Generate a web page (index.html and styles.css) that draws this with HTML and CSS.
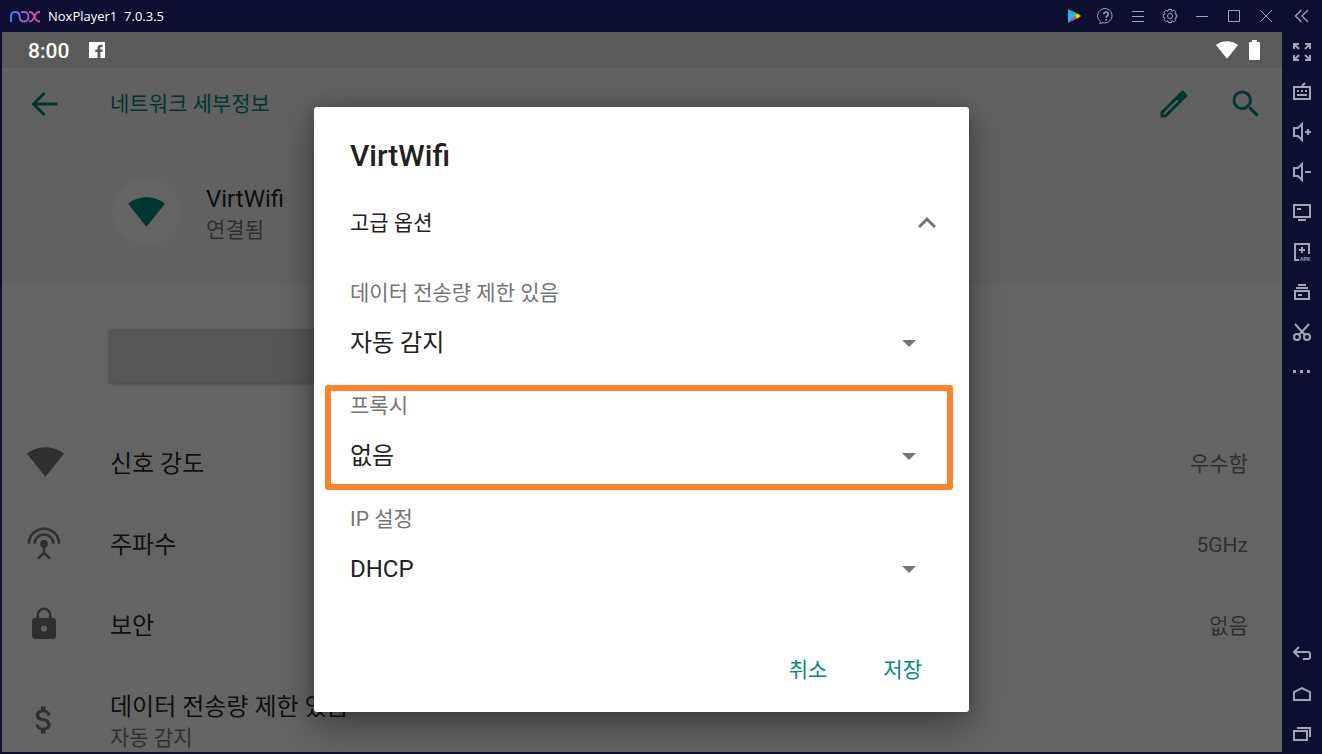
FILE: index.html
```html
<!DOCTYPE html>
<html lang="ko">
<head>
<meta charset="utf-8">
<title>NoxPlayer1 7.0.3.5</title>
<link rel="stylesheet" href="styles.css">
</head>
<body>
<svg class="defs" aria-hidden="true">
  <symbol id="fan" viewBox="0.36 3 23.28 18.5"><path fill="currentColor" d="M12.01 21.49 23.64 7c-.45-.34-4.93-4-11.64-4C5.28 3 .81 6.66.36 7l11.63 14.49z"/></symbol>
</svg>
<header class="titlebar">
  <svg class="logo" viewBox="0 0 32 14" fill="none" stroke="url(#nox)" stroke-width="1.900" aria-hidden="true">
    <defs><linearGradient id="nox" gradientUnits="userSpaceOnUse" x1="1" y1="0" x2="31" y2="0"><stop offset="0" stop-color="#3f7df6"/><stop offset=".5" stop-color="#9a5bd0"/><stop offset="1" stop-color="#f4419b"/></linearGradient></defs>
    <path d="M2 13V7.500Q2 3 6.300 3T10.600 7.500Q10.600 12.500 15 12.500T19.400 7.700Q19.400 3 15 3H12"/>
    <path d="M20 3h.5c3 0 4 2 5 4.800s2 4.700 5 4.700h.5M31 3h-.5c-3 0-4 2-5 4.800s-2 4.700-5 4.700H20"/>
  </svg>
  <span class="app-name">NoxPlayer1&nbsp; 7.0.3.5</span>
  <nav class="window-tools">
    <button aria-label="Play"><svg class="play" viewBox="0 0 20 20"><path fill="#18b9ff" d="M4 3v14l7-7z"/><path fill="#20d07c" d="M4 3l10 5-3 2.500z"/><path fill="#f04a50" d="M4 17l10-5-3-2.500z"/><path fill="#ffd500" d="M13.500 7.500 17 10l-3.500 2.500L11 10z"/></svg></button>
    <button aria-label="Help"><svg viewBox="0 0 20 20"><path d="M4.500 15.500A7.200 7.200 0 1 1 7 16.700c-1 .6-2.500.8-3.500.6.6-.5 1-1 1-1.800z"/><path stroke-width="1.500" d="M7.800 8.300c0-3 4.500-2.800 4.500-.1 0 1.700-2.200 1.700-2.200 3.600M10.100 13v1.500"/></svg></button>
    <button aria-label="Menu"><svg viewBox="0 0 20 20"><path d="M4 5.500h12M4 10.500h12M4 15.500h12"/></svg></button>
    <button aria-label="Settings"><svg viewBox="0 0 20 20"><path d="M8.500 3.300h3l.5 1.900 1.900-1 2 2-1 1.900 1.800.4v3l-1.800.4 1 1.900-2 2-1.900-1-.5 1.900h-3L8 14.800l-1.900 1-2-2 1-1.900-1.800-.4v-3l1.800-.4-1-1.900 2-2 1.900 1z"/><circle cx="10" cy="10" r="2.500"/></svg></button>
    <button aria-label="Minimize"><svg viewBox="0 0 20 20"><path d="M4 10.500h12"/></svg></button>
    <button aria-label="Maximize"><svg viewBox="0 0 20 20"><path d="M4.500 4.500h11v11h-11z"/></svg></button>
    <button aria-label="Close"><svg viewBox="0 0 20 20"><path d="M4 4l12 12M16 4 4 16"/></svg></button>
    <button class="wide" aria-label="Collapse"><svg viewBox="0 0 20 20"><path stroke-width="1.300" d="M9.500 4l-6 6 6 6M16 4l-6 6 6 6"/></svg></button>
  </nav>
</header>
<div class="player">
  <section class="device">
    <div class="statusbar">
      <span class="clock">8:00</span>
      <svg class="fb" viewBox="0 0 16 16" aria-hidden="true"><path fill="#fff" d="M0 0h16v16H0z"/><path fill="#5a5a5a" d="M8.500 16v-6H6.300V7.500h2.200V6c0-2.200 1.200-3.300 3.200-3.300h1.900v2.400h-1.200c-.8 0-1 .4-1 1.100v1.300h2.200l-.3 2.500h-1.900v6z"/></svg>
      <svg class="status-wifi" aria-hidden="true"><use href="#fan"/></svg>
      <svg class="battery" viewBox="0 0 11 20" aria-hidden="true"><path fill="#fff" d="M3 0h5v2h2q1 0 1 1v16q0 1-1 1H1q-1 0-1-1V3q0-1 1-1h2z"/></svg>
    </div>
    <div class="screen">
      <main class="page">
        <div class="page-head">
          <div class="appbar">
            <button aria-label="뒤로"><svg viewBox="0 0 24 24"><path fill="none" stroke="currentColor" stroke-width="2" d="M21 12H5.500M12.500 4.500 5 12l7.500 7.500"/></svg></button>
            <h1>네트워크 세부정보</h1>
            <button aria-label="수정"><svg viewBox="0 0 24 24"><path fill="currentColor" fill-rule="evenodd" d="M3 17.250V21h3.750L20.710 7.040a1 1 0 0 0 .29-.7c0-.4-.1-.5-.29-.71l-2.340-2.340a1 1 0 0 0-1.410 0zM5 18.080l9.060-9.060.92.920L5.920 19H5z"/></svg></button>
            <button aria-label="검색"><svg viewBox="0 0 24 24"><path fill="currentColor" d="M15.500 14h-.79l-.28-.27A6.470 6.470 0 0 0 16 9.500 6.500 6.500 0 1 0 9.500 16c1.610 0 3.090-.59 4.230-1.570l.27.28v.79l5 4.990L20.490 19zm-6 0C7.010 14 5 11.990 5 9.500S7.010 5 9.500 5 14 7.010 14 9.500 11.990 14 9.500 14z"/></svg></button>
          </div>
          <div class="network">
            <span class="network-icon"><svg class="fan"><use href="#fan"/></svg></span>
            <div class="row-text"><p class="primary">VirtWifi</p><p class="secondary">연결됨</p></div>
          </div>
        </div>
        <button class="forget" aria-label="저장 안함"></button>
        <ul class="details">
          <li><svg class="fan"><use href="#fan"/></svg><span class="primary">신호 강도</span><span class="value">우수함</span></li>
          <li><svg viewBox="0 0 24 24"><g fill="none" stroke="currentColor" stroke-width="1.700"><path d="M2 12.500a10 10 0 0 1 20 0M5.800 12.500a6.200 6.200 0 0 1 12.400 0M12 13v6M8 22.500l4-4 4 4"/></g><circle cx="12" cy="12.500" r="2.600" fill="currentColor"/></svg><span class="primary">주파수</span><span class="value">5GHz</span></li>
          <li><svg viewBox="0 0 24 24"><path fill="currentColor" fill-rule="evenodd" d="M18 8h-1V6A5 5 0 0 0 7 6v2H6a2 2 0 0 0-2 2v10c0 1.100.9 2 2 2h12a2 2 0 0 0 2-2V10a2 2 0 0 0-2-2zm-6 9a2 2 0 1 1 0-4 2 2 0 0 1 0 4zM8.700 8V6a3.300 3.300 0 0 1 6.600 0v2z"/></svg><span class="primary">보안</span><span class="value">없음</span></li>
          <li class="tall"><svg viewBox="0 0 24 24"><path fill="currentColor" d="M11.800 10.900c-2.270-.59-3-1.200-3-2.150 0-1.090 1.010-1.850 2.700-1.850 1.780 0 2.440.85 2.500 2.100h2.210c-.07-1.720-1.120-3.300-3.210-3.810V3h-3v2.160c-1.940.42-3.500 1.680-3.500 3.610 0 2.310 1.910 3.460 4.700 4.130 2.500.6 3 1.480 3 2.410 0 .69-.49 1.790-2.700 1.790-2.060 0-2.870-.92-2.980-2.100h-2.200c.12 2.190 1.760 3.420 3.680 3.830V21h3v-2.150c1.950-.37 3.500-1.500 3.500-3.550 0-2.840-2.430-3.810-4.700-4.400z"/></svg><div class="row-text"><p class="primary">데이터 전송량 제한 있음</p><p class="secondary">자동 감지</p></div></li>
        </ul>
      </main>
      <div class="scrim">
        <form class="dialog" role="dialog" aria-labelledby="dialog-title">
          <h2 id="dialog-title">VirtWifi</h2>
          <button type="button" class="advanced" aria-expanded="true">고급 옵션<svg viewBox="0 0 24 24" aria-hidden="true"><path fill="currentColor" d="M12 8l-6 6 1.410 1.410L12 10.830l4.590 4.580L18 14z"/></svg></button>
          <div class="field">
            <label for="metered">데이터 전송량 제한 있음</label>
            <div class="picker"><select id="metered"><option>자동 감지</option></select><svg viewBox="0 0 14 7" aria-hidden="true"><path d="M0 0h14L7 7z"/></svg></div>
          </div>
          <div class="field highlighted">
            <label for="proxy">프록시</label>
            <div class="picker"><select id="proxy"><option>없음</option></select><svg viewBox="0 0 14 7" aria-hidden="true"><path d="M0 0h14L7 7z"/></svg></div>
          </div>
          <div class="field">
            <label for="ip">IP 설정</label>
            <div class="picker"><select id="ip"><option>DHCP</option></select><svg viewBox="0 0 14 7" aria-hidden="true"><path d="M0 0h14L7 7z"/></svg></div>
          </div>
          <div class="actions"><button type="button">취소</button><button type="button">저장</button></div>
        </form>
      </div>
    </div>
  </section>
  <nav class="sidebar">
    <button aria-label="Full screen"><svg viewBox="0 0 20 20"><path d="M7 2H2v5M2 2l5 5M13 2h5v5M18 2l-5 5M2 13v5h5M2 18l5-5M18 13v5h-5M18 18l-5-5"/></svg></button>
    <button aria-label="Keyboard"><svg viewBox="0 0 20 20"><path d="M2 5h16v12H2zM10 4l3-3M5 9h2M9 9h2M13 9h2M5 13h10"/></svg></button>
    <button aria-label="Volume up"><svg viewBox="0 0 20 20"><path d="M10 2v16l-4-4H2V6h4zM13 10h6M16 7v6"/></svg></button>
    <button aria-label="Volume down"><svg viewBox="0 0 20 20"><path d="M10 2v16l-4-4H2V6h4zM13 10h6"/></svg></button>
    <button aria-label="Display"><svg viewBox="0 0 20 20"><path d="M2 3h16v12H2zM5 7h4M6 18h8"/></svg></button>
    <button aria-label="Install APK"><svg viewBox="0 0 20 20"><path d="M7 18H3V2h14v10M7 8h6M10 5v6"/><text x="8" y="19">APK</text></svg></button>
    <button aria-label="Files"><svg viewBox="0 0 20 20"><path d="M3 9h14v8H3zM4 6h12M6 3h8M6 13h4"/></svg></button>
    <button aria-label="Cut"><svg viewBox="0 0 20 20"><path d="M3 2l10 11M17 2 7 13"/><circle cx="5" cy="15" r="3"/><circle cx="15" cy="15" r="3"/></svg></button>
    <button aria-label="More"><svg viewBox="0 0 20 20"><path stroke-width="3" d="M1 9.500h3M8 9.500h3M15 9.500h3"/></svg></button>
    <button class="push" aria-label="Back"><svg viewBox="0 0 20 20"><path d="M7 3 2 8l5 5M2 8h14q2 0 2 2v3q0 2-2 2h-5"/></svg></button>
    <button aria-label="Home"><svg viewBox="0 0 20 20"><path d="M2 16V8l8-4 8 4v8z"/></svg></button>
    <button aria-label="Recent apps"><svg viewBox="0 0 20 20"><path d="M2 7h13v9H2zM5 4h13v9"/></svg></button>
  </nav>
</div>
</body>
</html>
```
FILE: styles.css
```css
* { box-sizing: border-box; }
body {
  margin: 0;
  height: 100vh;
  display: flex;
  flex-direction: column;
  background: #0d0f30;
  font-family: Roboto, "Noto Sans CJK KR", sans-serif;
}
h1, h2, p, ul { margin: 0; padding: 0; }
button, select {
  border: 0;
  padding: 0;
  background: none;
  color: inherit;
  font: inherit;
}
svg { display: block; flex: none; }
.defs { position: absolute; width: 0; height: 0; }

.titlebar { display: flex; align-items: center; height: 32px; padding-left: 9px; flex: none; }
.logo { width: 32px; height: 14px; }
.app-name { margin-left: 7px; color: #fff; font: 13px "Open Sans", "Noto Sans", sans-serif; }
.window-tools { display: flex; margin-left: auto; }
.window-tools button { width: 32px; height: 32px; display: grid; place-items: center; }
.window-tools .wide { width: 40px; }
.window-tools svg, .sidebar svg { width: 20px; height: 20px; fill: none; stroke: #a3a4b5; }
.window-tools .play { stroke: none; }

.player { display: flex; flex: 1; min-height: 0; }
.sidebar { width: 40px; display: flex; flex-direction: column; flex: none; }
.sidebar button { height: 40px; display: grid; place-items: center; }
.sidebar svg { stroke-width: 2; }
.sidebar text { font: bold 5px "Liberation Sans", sans-serif; fill: #a3a4b5; stroke: none; }
.sidebar .push { margin-top: auto; }

.device { flex: 1; min-width: 0; display: flex; flex-direction: column; margin: 0 0 2px 2px; }
.statusbar {
  display: flex;
  align-items: center;
  height: 36px;
  padding: 0 22px 0 26px;
  background: #5a5a5a;
  color: #fff;
  font-size: 21px;
  font-weight: 500;
  flex: none;
}
.clock { padding-top: 2px; }
.fb { width: 16px; height: 16px; margin-left: 20px; }
.status-wifi { width: 22px; height: 18px; margin-left: auto; }
.battery { width: 11px; height: 20px; margin-left: 11px; }

.screen { flex: 1; min-height: 0; display: grid; grid-template: minmax(0, 1fr) / minmax(0, 1fr); }
.page, .scrim { grid-area: 1 / 1; overflow: hidden; }
.page { background: #fafafa; color: rgba(0, 0, 0, .87); }
.page-head { background: #f3f3f3; }
.appbar { display: flex; align-items: center; height: 72px; padding: 0 18px 0 24px; color: #00897b; }
.appbar svg, .details svg { width: 36px; height: 36px; }
.appbar h1 { flex: 1; margin-left: 48px; font-size: 21px; font-weight: 400; line-height: 30px; }
.appbar button + button { margin-left: 36px; }
.network { display: flex; align-items: center; gap: 27px; height: 144px; padding-left: 111px; }
.network-icon {
  width: 66px;
  height: 66px;
  display: grid;
  place-items: center;
  border-radius: 50%;
  background: #fafafa;
  color: #00897b;
}
.fan, .details .fan { width: 37px; height: 30px; }
.row-text { padding-top: 4px; }
.primary { font-size: 24px; line-height: 32px; }
.secondary { font-size: 21px; line-height: 30px; color: rgba(0, 0, 0, .54); }
.forget {
  display: block;
  width: 40%;
  height: 54px;
  margin: 45px 0 39px 107px;
  border-radius: 3px;
  background: #d6d6d6;
  box-shadow: 0 1px 3px rgba(0, 0, 0, .3);
}
.details { list-style: none; }
.details li { display: flex; align-items: center; height: 81px; padding: 2px 34px 0 24px; }
.details svg { margin: 0 48px 4px 0; color: #757575; }
.details .fan { margin: 0 46px 4px 1px; }
.details .tall { height: 108px; }
.details .tall svg { margin-bottom: 0; }
.value { margin-left: auto; font-size: 21px; line-height: 30px; color: rgba(0, 0, 0, .54); }

.scrim { display: grid; place-items: center; padding: 0 1px 1px 0; background: rgba(0, 0, 0, .6); }
.dialog {
  width: 90%;
  max-width: 655px;
  padding: 31px 36px 18px;
  border-radius: 3px;
  background: #fff;
  color: #212121;
  box-shadow: 0 14px 36px rgba(0, 0, 0, .35), 0 0 14px rgba(0, 0, 0, .2);
}
.dialog h2 { font-size: 30px; font-weight: 500; line-height: 36px; }
.advanced {
  display: flex;
  align-items: center;
  justify-content: space-between;
  width: calc(100% + 12px);
  height: 48px;
  margin: 25px 0;
  font-size: 21px;
  line-height: 30px;
}
.advanced svg { width: 36px; height: 36px; color: #757575; }
.field { padding: 6px 0 18px; }
.field label { display: block; margin-bottom: 11px; font-size: 21px; line-height: 30px; color: #757575; }
.picker { display: grid; align-items: center; height: 48px; }
.picker select, .picker svg { grid-area: 1 / 1; }
.picker select { appearance: none; width: 100%; height: 48px; font-size: 24px; }
.picker svg { width: 14px; height: 7px; margin-right: 17px; justify-self: end; fill: #757575; pointer-events: none; }
.highlighted { position: relative; }
.highlighted::after {
  content: "";
  position: absolute;
  inset: 0 -20px 8px -25px;
  border: 6px solid #ff822b;
  border-radius: 3px;
  pointer-events: none;
}
.actions { display: flex; justify-content: flex-end; gap: 34px; margin-top: 35px; color: #00897b; }
.actions button { height: 48px; padding: 0 11px; font-size: 21px; line-height: 30px; }
```
